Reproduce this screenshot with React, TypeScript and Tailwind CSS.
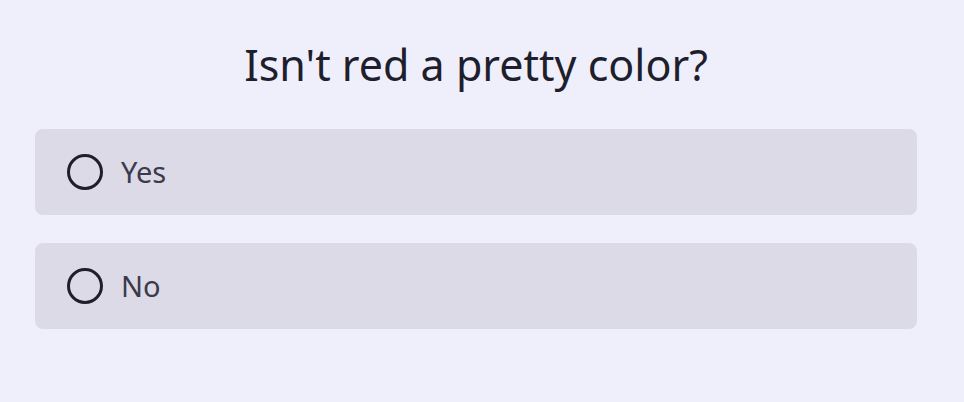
import { useState } from 'react';

const options = ['Yes', 'No'];

export default function App() {
  const [selected, setSelected] = useState<string | null>(null);

  return (
    <div
      className="h-[402px] w-[964px] bg-[#efeffb]"
      style={{ fontFamily: '"Noto Sans", "Open Sans", sans-serif' }}
    >
      <div className="flex w-[952px] flex-col px-[35px] pt-[36px]">
        <h1 className="text-center text-[43px] leading-[58px] text-[#1e1e2c]">Isn&apos;t red a pretty color?</h1>
        <div className="mt-[35px] flex flex-col gap-[28px]">
          {options.map((opt) => (
            <button
              key={opt}
              type="button"
              onClick={() => setSelected(opt)}
              className="flex h-[86px] items-center gap-[18px] rounded-[8px] bg-[#dbdae6] pl-[32px] text-left"
            >
              <span className="flex h-[36px] w-[36px] items-center justify-center rounded-full border-[3px] border-[#1e1e2c]">
                {selected === opt ? <span className="h-[18px] w-[18px] rounded-full bg-[#1e1e2c]" /> : null}
              </span>
              <span className="text-[29px] text-[#3b3a4c]">{opt}</span>
            </button>
          ))}
        </div>
      </div>
    </div>
  );
}
